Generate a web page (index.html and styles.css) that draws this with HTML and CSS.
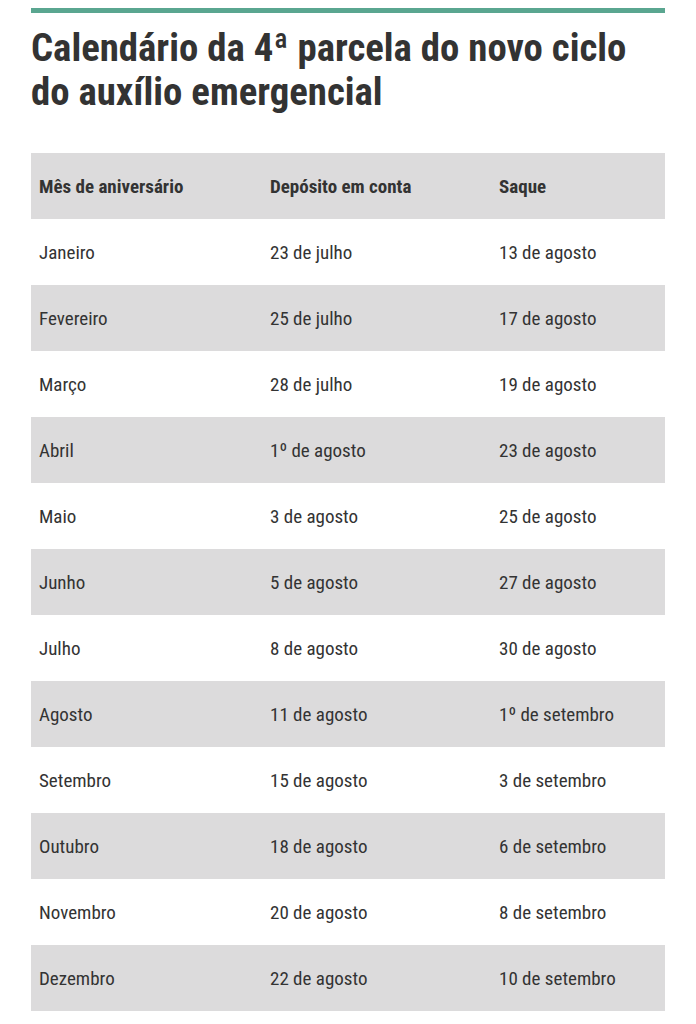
FILE: index.html
```html
<!DOCTYPE html>
<html lang="pt-BR">
<head>
<meta charset="utf-8">
<title>Calendário</title>
<link rel="stylesheet" href="styles.css">
</head>
<body>
<div class="page">
  <div class="topbar"></div>
  <h1 class="title">Calendário da 4ª parcela do novo ciclo do auxílio emergencial</h1>
  <table class="cal">
    <thead>
      <tr><th class="c1">Mês de aniversário</th><th class="c2">Depósito em conta</th><th class="c3">Saque</th></tr>
    </thead>
    <tbody>
      <tr><td>Janeiro</td><td>23 de julho</td><td>13 de agosto</td></tr>
      <tr><td>Fevereiro</td><td>25 de julho</td><td>17 de agosto</td></tr>
      <tr><td>Março</td><td>28 de julho</td><td>19 de agosto</td></tr>
      <tr><td>Abril</td><td>1º de agosto</td><td>23 de agosto</td></tr>
      <tr><td>Maio</td><td>3 de agosto</td><td>25 de agosto</td></tr>
      <tr><td>Junho</td><td>5 de agosto</td><td>27 de agosto</td></tr>
      <tr><td>Julho</td><td>8 de agosto</td><td>30 de agosto</td></tr>
      <tr><td>Agosto</td><td>11 de agosto</td><td>1º de setembro</td></tr>
      <tr><td>Setembro</td><td>15 de agosto</td><td>3 de setembro</td></tr>
      <tr><td>Outubro</td><td>18 de agosto</td><td>6 de setembro</td></tr>
      <tr><td>Novembro</td><td>20 de agosto</td><td>8 de setembro</td></tr>
      <tr><td>Dezembro</td><td>22 de agosto</td><td>10 de setembro</td></tr>
    </tbody>
  </table>
</div>
</body>
</html>
```
FILE: styles.css
```css
html, body {
  margin: 0;
  padding: 0;
  background: #ffffff;
}
body {
  font-family: "Roboto Condensed", "Liberation Sans Narrow", "DejaVu Sans Condensed", Roboto, sans-serif;
  color: #333333;
}
.page {
  padding: 8px 31px 0 31px;
}
.topbar {
  height: 5px;
  background: #5aa690;
}
.title {
  margin: 13px 0 0 0;
  font-size: 38.8px;
  line-height: 44px;
  font-weight: 700;
  color: #333333;
  letter-spacing: 0;
}
.cal {
  margin-top: 39px;
  width: 100%;
  border-collapse: collapse;
  table-layout: fixed;
}
.cal th, .cal td {
  box-sizing: border-box;
  height: 66px;
  padding: 0 8px;
  text-align: left;
  vertical-align: middle;
  font-size: 19px;
  color: #333333;
}
.cal th {
  font-weight: 700;
}
.cal td {
  font-weight: 400;
}
.cal .c1 { width: 231px; }
.cal .c2 { width: 229px; }
.cal thead tr,
.cal tbody tr:nth-child(even) {
  background: #dcdbdc;
}
```
